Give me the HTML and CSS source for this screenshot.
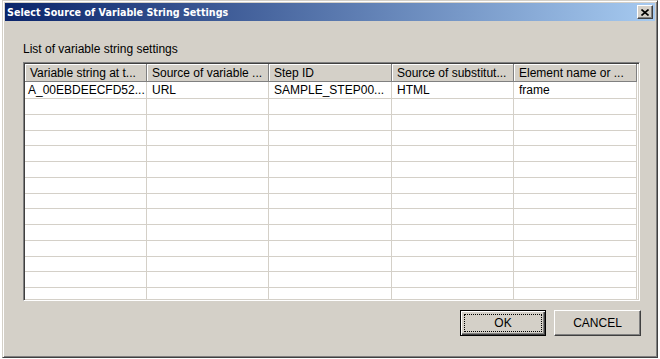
FILE: index.html
```html
<!DOCTYPE html>
<html>
<head>
    <meta charset="UTF-8">
    <title>Select Source of Variable String Settings</title>
    <link rel="stylesheet" href="styles.css">
</head>
<body>
    <div class="dialog">
        <div class="title-bar">
            <span class="title-text">Select Source of Variable String Settings</span>
            <button class="close-button" title="Close">
                <svg width="8" height="7" viewBox="0 0 8 7">
                    <path d="M0.5 0.5 L7.5 6.5 M7.5 0.5 L0.5 6.5" stroke="#000" stroke-width="1.6" fill="none"/>
                </svg>
            </button>
        </div>
        <div class="dialog-body">
            <div class="list-label">List of variable string settings</div>
            <div class="table-frame">
                <table class="settings-table">
                    <colgroup>
                        <col style="width: 122px">
                        <col style="width: 122px">
                        <col style="width: 123px">
                        <col style="width: 122px">
                        <col style="width: 123px">
                    </colgroup>
                    <thead>
                        <tr>
                            <th>Variable string at t...</th>
                            <th>Source of variable ...</th>
                            <th>Step ID</th>
                            <th>Source of substitut...</th>
                            <th>Element name or ...</th>
                        </tr>
                    </thead>
                    <tbody>
                        <tr class="first-row">
                            <td>A_00EBDEECFD52...</td>
                            <td>URL</td>
                            <td>SAMPLE_STEP00...</td>
                            <td>HTML</td>
                            <td>frame</td>
                        </tr>
                        <tr><td></td><td></td><td></td><td></td><td></td></tr>
                        <tr><td></td><td></td><td></td><td></td><td></td></tr>
                        <tr><td></td><td></td><td></td><td></td><td></td></tr>
                        <tr><td></td><td></td><td></td><td></td><td></td></tr>
                        <tr><td></td><td></td><td></td><td></td><td></td></tr>
                        <tr><td></td><td></td><td></td><td></td><td></td></tr>
                        <tr><td></td><td></td><td></td><td></td><td></td></tr>
                        <tr><td></td><td></td><td></td><td></td><td></td></tr>
                        <tr><td></td><td></td><td></td><td></td><td></td></tr>
                        <tr><td></td><td></td><td></td><td></td><td></td></tr>
                        <tr><td></td><td></td><td></td><td></td><td></td></tr>
                        <tr><td></td><td></td><td></td><td></td><td></td></tr>
                        <tr><td></td><td></td><td></td><td></td><td></td></tr>
                    </tbody>
                </table>
            </div>
            <div class="button-group">
                <button class="button ok-button">OK</button>
                <button class="button cancel-button">CANCEL</button>
            </div>
        </div>
    </div>
</body>
</html>
```

FILE: styles.css
```css
body {
    margin: 0;
    padding: 0 2px;
    background-color: #ffffff;
    font-family: "Liberation Sans", Arial, sans-serif;
    font-size: 12px;
    color: #000;
}

.dialog {
    width: 656px;
    height: 358px;
    box-sizing: border-box;
    background-color: #d4d0c8;
    border: 1px solid;
    border-color: #d4d0c8 #404040 #404040 #d4d0c8;
    box-shadow: inset 1px 1px #fff, inset -1px -1px #808080;
    padding: 2px;
    display: flex;
    flex-direction: column;
}

.title-bar {
    height: 18px;
    display: flex;
    align-items: center;
    justify-content: space-between;
    padding: 0 2px;
    background: linear-gradient(to right, #0a246a, #a6caf0);
}

.title-text {
    color: #fff;
    font-family: "DejaVu Sans", Tahoma, sans-serif;
    font-weight: bold;
    font-size: 9.6px;
    letter-spacing: 0;
}

.close-button {
    width: 16px;
    height: 14px;
    padding: 0;
    display: flex;
    align-items: center;
    justify-content: center;
    background-color: #d4d0c8;
    border: 1px solid;
    border-color: #fff #404040 #404040 #fff;
    box-shadow: inset -1px -1px #808080;
}

.dialog-body {
    flex: 1;
    display: flex;
    flex-direction: column;
    padding: 21px 14px 0 18px;
}

.list-label {
    line-height: 14px;
    margin-bottom: 6px;
}

.table-frame {
    width: 617px;
    height: 239px;
    box-sizing: border-box;
    overflow: hidden;
    background-color: #fff;
    border: 1px solid;
    border-color: #808080 #fff #fff #808080;
    box-shadow: inset 1px 1px #404040, inset -1px -1px #d4d0c8;
    padding: 1px;
}

.settings-table {
    width: 612px;
    table-layout: fixed;
    border-collapse: separate;
    border-spacing: 0;
}

.settings-table th {
    height: 18px;
    box-sizing: border-box;
    padding: 0 5px;
    text-align: left;
    font-weight: normal;
    white-space: nowrap;
    overflow: hidden;
    background-color: #d4d0c8;
    border-right: 1px solid #808080;
    border-bottom: 1px solid #808080;
    box-shadow: inset 1px 1px #fff;
}

.settings-table td {
    height: 15.75px;
    box-sizing: border-box;
    padding: 0 5px;
    white-space: nowrap;
    overflow: hidden;
    border-right: 1px solid #d4d0c8;
    border-bottom: 1px solid #d4d0c8;
}

.settings-table .first-row td {
    height: 17px;
}

.settings-table td:first-child {
    padding-left: 3px;
}

.button-group {
    display: flex;
    justify-content: flex-end;
    align-items: flex-end;
    gap: 8px;
    margin-top: 9px;
}

.button {
    height: 26px;
    box-sizing: border-box;
    padding: 0;
    font-family: "Liberation Sans", Arial, sans-serif;
    font-size: 12px;
    color: #000;
    background-color: #d4d0c8;
}

.ok-button {
    width: 86px;
    border: 1px solid #000;
    box-shadow: inset 1px 1px #fff, inset -1px -1px #404040, inset -2px -2px #808080;
    outline: 1px dotted #000;
    outline-offset: -5px;
}

.cancel-button {
    width: 87px;
    border: 1px solid;
    border-color: #fff #404040 #404040 #fff;
    box-shadow: inset -1px -1px #808080;
}
```
